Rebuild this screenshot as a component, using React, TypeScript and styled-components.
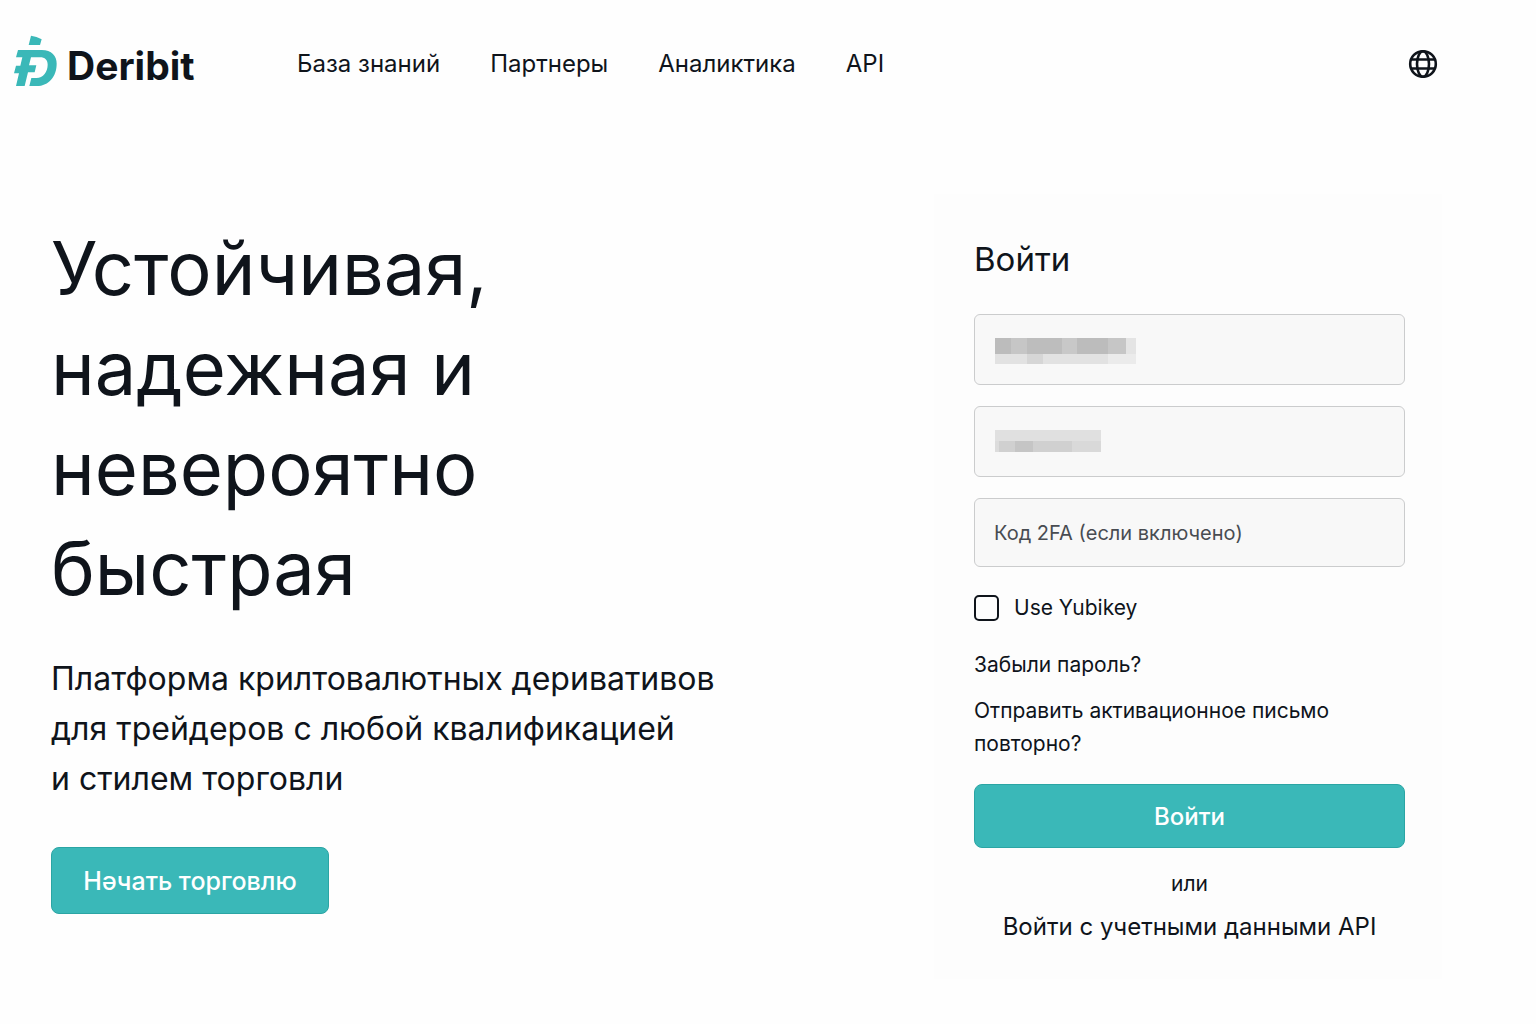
import React from "react";
import styled, { createGlobalStyle } from "styled-components";

const TEAL = "#3ab8b8";
const INK = "#0f141b";

const GlobalStyle = createGlobalStyle`
  *, *::before, *::after { box-sizing: border-box; }
  body { margin: 0; background: #fefefe; color: ${INK}; font-family: Inter, "Liberation Sans", sans-serif; }
  h1, h2, p { margin: 0; font-weight: 400; }
  a { color: inherit; text-decoration: none; }
  button, input { font: inherit; }
`;

const Header = styled.header`
  display: flex;
  align-items: center;
  height: 128px;
  padding: 0 98px 0 14px;
`;
const Brand = styled.a`
  display: flex;
  align-items: flex-start;
  gap: 10px;
  width: 283px;
  height: 58px;
`;
const Wordmark = styled.span`
  align-self: flex-end;
  font-size: 39px;
  font-weight: 700;
  line-height: 54px;
`;
const Nav = styled.nav`
  display: flex;
  flex: 1;
  gap: 50px;
  font-size: 24px;
  line-height: 34px;
`;
const IconButton = styled.button`
  display: flex;
  padding: 0;
  border: 0;
  background: none;
  color: ${INK};
  cursor: pointer;
`;
const Main = styled.main`
  display: flex;
  align-items: flex-start;
  justify-content: space-between;
  padding: 66px 94px 46px 51px;
`;
const Hero = styled.section`
  width: 700px;
  padding-top: 24px;
`;
const Title = styled.h1`
  max-width: 540px;
  font-size: 74px;
  line-height: 100px;
`;
const Lead = styled.p`
  margin-top: 36px;
  font-size: 32px;
  line-height: 50px;
`;
const Button = styled.button<{ $wide?: boolean }>`
  width: ${(p) => (p.$wide ? "100%" : "278px")};
  height: ${(p) => (p.$wide ? 64 : 67)}px;
  margin-top: ${(p) => (p.$wide ? 24 : 43)}px;
  padding: 0;
  border: 1px solid #2ba5a4;
  border-radius: 8px;
  background: ${TEAL};
  color: #fff;
  font-size: ${(p) => (p.$wide ? 24 : 25)}px;
  font-weight: 500;
  cursor: pointer;
`;
const Card = styled.form`
  display: flex;
  flex-direction: column;
  width: 508px;
  padding: 40px 37px 35px 40px;
  background: #fdfdfd;
`;
const CardTitle = styled.h2`
  font-size: 33px;
  line-height: 50px;
`;
const Fields = styled.div`
  display: grid;
  gap: 21px;
  margin-top: 30px;
`;
const Field = styled.label`
  position: relative;
  display: block;
`;
const Input = styled.input<{ $compact?: boolean }>`
  display: block;
  width: 100%;
  height: ${(p) => (p.$compact ? 69 : 71)}px;
  padding: 0 19px;
  border: 1px solid #cbcccd;
  border-radius: 6px;
  background: #f8f8f8;
  color: ${INK};
  font-size: 20px;
  &::placeholder { color: #484c52; opacity: 1; }
`;
const Mask = styled.svg`
  position: absolute;
  top: 24px;
  left: 21px;
  pointer-events: none;
`;
const Check = styled.label`
  display: flex;
  align-items: center;
  gap: 15px;
  margin-top: 27px;
  font-size: 21px;
  line-height: 28px;
`;
const CheckBox = styled.input`
  appearance: none;
  width: 25px;
  height: 26px;
  margin: 0;
  border: 2px solid ${INK};
  border-radius: 5px;
  &:checked { background: ${TEAL}; }
`;
const Links = styled.div`
  display: grid;
  justify-items: start;
  gap: 13px;
  margin-top: 26px;
  font-size: 21px;
  line-height: 33px;
`;
const Or = styled.p`
  margin-top: 20px;
  font-size: 21px;
  line-height: 32px;
  text-align: center;
`;
const ApiLink = styled.a`
  align-self: center;
  margin-top: 10px;
  font-size: 24px;
  line-height: 34px;
`;

type Cell = [x: number, y: number, w: number, h: number, fill: string];

const LOGIN_CELLS: Cell[] = [
  [0, 0, 16, 16, "#bcbcbc"], [16, 0, 16, 16, "#c6c6c6"], [32, 0, 35, 16, "#bdbdbd"],
  [67, 0, 15, 16, "#c8c8c8"], [82, 0, 31, 16, "#bcbcbc"], [113, 0, 18, 16, "#c6c6c6"],
  [131, 0, 10, 16, "#e4e4e4"], [0, 16, 32, 10, "#e2e2e2"], [32, 16, 16, 10, "#d6d6d6"],
  [48, 16, 65, 10, "#e2e2e2"], [113, 16, 28, 10, "#ebebeb"],
];
const PASSWORD_CELLS: Cell[] = [
  [0, 0, 106, 11, "#e0e0e0"], [0, 11, 4, 11, "#dcdcdc"], [4, 11, 16, 11, "#d0d0d0"],
  [20, 11, 18, 11, "#c5c5c5"], [38, 11, 39, 11, "#d0d0d0"], [77, 11, 29, 11, "#d9d9d9"],
];

function Mosaic({ cells }: { cells: Cell[] }) {
  return (
    <Mask width="142" height="26" shapeRendering="crispEdges" aria-hidden="true">
      {cells.map(([x, y, w, h, fill]) => (
        <rect key={`${x}-${y}`} x={x} y={y} width={w} height={h} fill={fill} />
      ))}
    </Mask>
  );
}

function Logo() {
  return (
    <svg width="43" height="52" viewBox="42 45 129 156" fill={TEAL} aria-hidden="true">
      <path d="M93 47Q110 49 125 58L120 75H86Z" />
      <path d="M54 90H125C155 90 170 108 170 131C170 168 147 198 110 198H88L94 174H109C130 174 143 155 143 134C143 120 135 112 120 112H93L87 136H109L104 157H84L74 198H48L57 160H42L48 137H61L67 112H48Z" />
    </svg>
  );
}

function Globe() {
  return (
    <svg width="30" height="30" viewBox="0 0 30 30" fill="none" stroke="currentColor" strokeWidth="2.6" aria-hidden="true">
      <circle cx="15" cy="15" r="12.8" />
      <ellipse cx="15" cy="15" rx="6" ry="12.8" />
      <path d="M3 10.5H27M3 19.5H27" />
    </svg>
  );
}

const NAV = ["База знаний", "Партнеры", "Аналиктика", "API"];

export default function App() {
  return (
    <>
      <GlobalStyle />
      <Header>
        <Brand href="#"><Logo /><Wordmark>Deribit</Wordmark></Brand>
        <Nav>{NAV.map((item) => <a key={item} href="#">{item}</a>)}</Nav>
        <IconButton type="button" aria-label="Язык"><Globe /></IconButton>
      </Header>
      <Main>
        <Hero>
          <Title>Устойчивая,<br />надежная и<br />невероятно<br />быстрая</Title>
          <Lead>Платформа крилтовалютных деривативов<br />для трейдеров с любой квалификацией<br />и стилем торговли</Lead>
          <Button type="button">Нәчать торговлю</Button>
        </Hero>
        <Card onSubmit={(e) => e.preventDefault()}>
          <CardTitle>Войти</CardTitle>
          <Fields>
            <Field><Input type="text" aria-label="Эл. почта" /><Mosaic cells={LOGIN_CELLS} /></Field>
            <Field><Input type="password" aria-label="Пароль" /><Mosaic cells={PASSWORD_CELLS} /></Field>
            <Field><Input $compact type="text" aria-label="Код 2FA" placeholder="Код 2FA (если включено)" /></Field>
          </Fields>
          <Check><CheckBox type="checkbox" />Use Yubikey</Check>
          <Links>
            <a href="#">Забыли пароль?</a>
            <a href="#">Отправить активационное письмо повторно?</a>
          </Links>
          <Button type="submit" $wide>Войти</Button>
          <Or>или</Or>
          <ApiLink href="#">Войти с учетными данными API</ApiLink>
        </Card>
      </Main>
    </>
  );
}
